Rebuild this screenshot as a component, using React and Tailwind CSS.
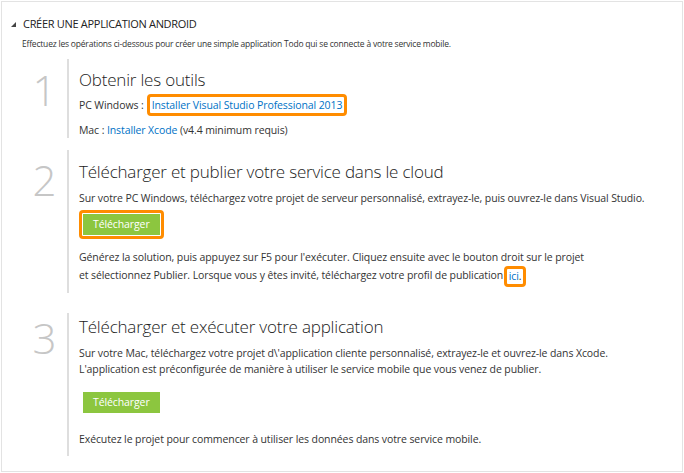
import React from "react";

const Step = ({ num, title, numPad, titlePad, className, children }) => (
  <div className={`flex ${className}`}>
    <div
      className={`w-[45px] shrink-0 text-center text-[42px] leading-none font-light text-[#c6c6c6] ${numPad}`}
    >
      {num}
    </div>
    <div className="border-l-2 border-[#dedede] pl-[10px] flex-1">
      <h2 className={`text-[17px] tracking-[-0.2px] font-light text-[#222] leading-[24px] ${titlePad}`}>
        {title}
      </h2>
      {children}
    </div>
  </div>
);

const GreenButton = ({ highlighted }) => {
  const btn = (
    <span className="inline-block bg-[#8cc63f] text-white text-[10.5px] tracking-[-0.1px] px-[10px] h-[21px] leading-[21px]">
      Télécharger
    </span>
  );
  if (!highlighted) return <div className="pl-[4px] leading-none">{btn}</div>;
  return (
    <div className="inline-block border-[3px] border-[#ff8c00] rounded-[4px] p-px leading-none">{btn}</div>
  );
};

export default function App() {
  return (
    <div
      className="w-[684px] h-[473px] bg-white p-px text-[#333]"
      style={{ fontFamily: '"Open Sans", "Noto Sans", sans-serif' }}
    >
      <div className="h-[471px] border border-[#e3e3e3] pl-[20px] pt-[14px]">
        <div className="flex items-center text-[11px] tracking-[-0.3px] leading-[16px] text-[#222]">
          <span className="w-0 h-0 border-l-[5px] border-l-transparent border-b-[5px] border-b-[#444] -ml-[11px] mr-[7px]"></span>
          CRÉER UNE APPLICATION ANDROID
        </div>
        <p className="text-[8.5px] tracking-[-0.2px] leading-[14px] mt-[5px]">
          Effectuez les opérations ci-dessous pour créer une simple application Todo qui se connecte à votre service mobile.
        </p>

        <Step num="1" title="Obtenir les outils" numPad="pt-[10px]" titlePad="pt-[9px]" className="mt-[8px]">
          <div className="text-[10.5px] tracking-[-0.1px] leading-[16px] mt-[2px] flex items-center">
            PC Windows :
            <span className="ml-[3px] border-[3px] border-[#ff8c00] rounded-[4px] px-[2px] text-[#0072c6]">
              Installer Visual Studio Professional 2013
            </span>
          </div>
          <p className="text-[10.5px] tracking-[-0.1px] leading-[16px] mt-[6px]">
            Mac : <span className="text-[#0072c6]">Installer Xcode</span> (v4.4 minimum requis)
          </p>
        </Step>

        <Step
          num="2"
          title="Télécharger et publier votre service dans le cloud"
          numPad="pt-[9px]"
          titlePad="pt-[10px]"
          className="mt-[12px]"
        >
          <p className="text-[10.5px] tracking-[-0.1px] leading-[16px] mt-[6px]">
            Sur votre PC Windows, téléchargez votre projet de serveur personnalisé, extrayez-le, puis ouvrez-le dans Visual Studio.
          </p>
          <div className="mt-[4px]">
            <GreenButton highlighted />
          </div>
          <p className="text-[10.5px] tracking-[-0.1px] leading-[18px] mt-[9px] pb-[6px]">
            Générez la solution, puis appuyez sur F5 pour l'exécuter. Cliquez ensuite avec le bouton droit sur le projet
            <br />
            et sélectionnez Publier. Lorsque vous y êtes invité, téléchargez votre profil de publication{" "}
            <span className="inline-block border-[3px] border-[#ff8c00] rounded-[4px] px-[2px] leading-[15px] -ml-[2px] align-middle">
              <span className="text-[#0072c6]">ici</span>.
            </span>
          </p>
        </Step>

        <Step
          num="3"
          title="Télécharger et exécuter votre application"
          numPad="pt-[4px]"
          titlePad="pt-[2px]"
          className="mt-[20px]"
        >
          <p className="text-[10.5px] tracking-[-0.1px] leading-[16px] mt-[6px]">
            Sur votre Mac, téléchargez votre projet d\'application cliente personnalisé, extrayez-le et ouvrez-le dans Xcode.
            <br />
            L'application est préconfigurée de manière à utiliser le service mobile que vous venez de publier.
          </p>
          <div className="mt-[15px]">
            <GreenButton />
          </div>
          <p className="text-[10.5px] tracking-[-0.1px] leading-[16px] mt-[18px] pb-[9px]">
            Exécutez le projet pour commencer à utiliser les données dans votre service mobile.
          </p>
        </Step>
      </div>
    </div>
  );
}
